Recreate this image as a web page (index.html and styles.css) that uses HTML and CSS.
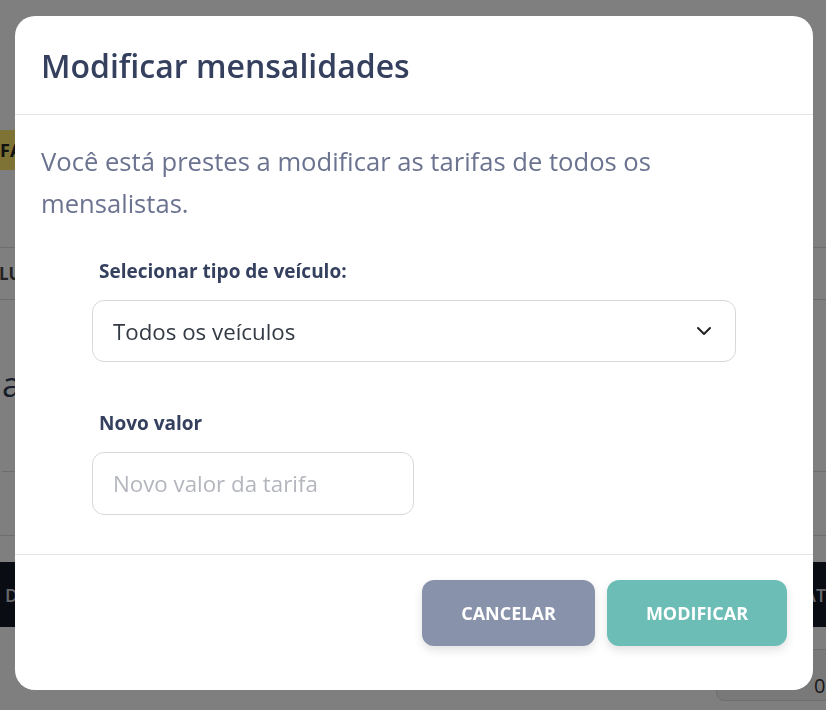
FILE: index.html
```html
<!DOCTYPE html>
<html lang="pt-BR">
<head>
<meta charset="utf-8">
<title>Modificar mensalidades</title>
<link rel="stylesheet" href="styles.css">
</head>
<body>
<div class="page">
  <div class="badge-row"><span class="badge">FATURAS</span></div>
  <div class="tabs"><span class="tab">LUGARES</span></div>
  <div class="page-title">atividades</div>
  <div class="rows"><div class="row"></div></div>
  <div class="darkbar"><span>DADOS</span><span>DATA</span></div>
  <div class="pager"><span class="pager-box">0</span></div>
</div>

<div class="overlay">
  <div class="modal">
    <div class="modal-header">
      <h2 class="modal-title">Modificar mensalidades</h2>
    </div>
    <div class="modal-body">
      <p class="intro">Você está prestes a modificar as tarifas de todos os mensalistas.</p>
      <div class="form">
        <div class="field">
          <label class="field-label">Selecionar tipo de veículo:</label>
          <div class="select">
            <span class="select-value">Todos os veículos</span>
            <svg class="chevron" width="18" height="18" viewBox="0 0 18 18" aria-hidden="true">
              <path d="M3 6 L9 12 L15 6" fill="none" stroke="#222" stroke-width="2" stroke-linecap="round" stroke-linejoin="round"/>
            </svg>
          </div>
        </div>
        <div class="field field-second">
          <label class="field-label">Novo valor</label>
          <div class="input"><span class="placeholder">Novo valor da tarifa</span></div>
        </div>
      </div>
    </div>
    <div class="modal-footer">
      <button class="btn btn-cancel">CANCELAR</button>
      <button class="btn btn-ok">MODIFICAR</button>
    </div>
  </div>
</div>
</body>
</html>
```

FILE: styles.css
```css
* { box-sizing: border-box; }
html, body { margin: 0; padding: 0; }
body {
  width: 826px;
  height: 710px;
  overflow: hidden;
  font-family: "Open Sans", "Noto Sans", sans-serif;
  background: #ffffff;
}

/* background page */
.page {
  height: 710px;
  overflow: hidden;
  background: #ffffff;
}
.badge-row {
  padding-top: 130px;
  height: 170px;
}
.badge {
  display: flex;
  align-items: center;
  width: 120px;
  height: 40px;
  background: #fde56a;
  color: #222;
  font-weight: 700;
  font-size: 18px;
  padding-left: 0;
}
.tabs {
  margin-top: 77px;
  height: 53px;
  border-top: 1px solid #dddddd;
  border-bottom: 1px solid #dddddd;
  display: flex;
  align-items: center;
}
.tab {
  font-weight: 700;
  font-size: 17px;
  color: #444;
  margin-left: -1px;
}
.page-title {
  height: 172px;
  padding-top: 62px;
  font-size: 34px;
  color: #2e3a55;
  margin-left: 2px;
  line-height: 44px;
  border-bottom: 1px solid #dddddd;
}
.rows {
  height: 64px;
  border-bottom: 1px solid #dddddd;
}
.darkbar {
  margin-top: 26px;
  height: 65px;
  background: #141828;
  color: #cfcfd6;
  font-size: 18px;
  font-weight: 600;
  display: flex;
  align-items: center;
  justify-content: space-between;
  padding: 0 28px 0 5px;
  margin-right: -40px;
}
.pager {
  display: flex;
  justify-content: flex-end;
  padding-top: 22px;
}
.pager-box {
  width: 120px;
  height: 52px;
  margin-right: -10px;
  background: #f2f2f2;
  border: 1px solid #dcdcdc;
  border-radius: 8px;
  color: #333;
  font-size: 20px;
  padding: 22px 0 0 97px;
  overflow: hidden;
}

/* overlay + modal */
.overlay {
  position: fixed;
  inset: 0;
  background: rgba(0, 0, 0, 0.5);
  display: flex;
  align-items: flex-start;
  padding: 16px 13px 0 15px;
}
.modal {
  width: 798px;
  background: #ffffff;
  border-radius: 20px;
  overflow: hidden;
}
.modal-header {
  padding: 30px 26px 28px;
  border-bottom: 1px solid #e3e5e9;
}
.modal-title {
  margin: 0;
  font-size: 32px;
  line-height: 40px;
  font-weight: 600;
  color: #34405e;
}
.modal-body {
  padding: 26px 26px 39px;
  border-bottom: 1px solid #e3e5e9;
}
.intro {
  margin: 0;
  font-size: 25.6px;
  line-height: 42px;
  color: #6b7390;
  width: 660px;
}
.form {
  padding: 34px 51px 0;
}
.field-second { margin-top: 49px; }
.field-label {
  display: block;
  padding-left: 7px;
  font-size: 19px;
  line-height: 24px;
  font-weight: 700;
  color: #34405e;
  margin-bottom: 17px;
}
.select {
  height: 62px;
  border: 1px solid #d6d8dc;
  border-radius: 12px;
  display: flex;
  align-items: center;
  justify-content: space-between;
  padding: 0 22px 0 20px;
}
.select-value {
  font-size: 22.3px;
  color: #333a44;
}
.chevron { display: block; }
.input {
  width: 322px;
  height: 63px;
  border: 1px solid #d6d8dc;
  border-radius: 12px;
  display: flex;
  align-items: center;
  padding: 0 20px;
}
.placeholder {
  font-size: 22.3px;
  color: #b3b6bd;
}
.modal-footer {
  display: flex;
  justify-content: flex-end;
  gap: 12px;
  padding: 25px 26px 44px;
}
.btn {
  height: 66px;
  border: none;
  border-radius: 12px;
  color: #ffffff;
  font-family: "Open Sans", "Noto Sans", sans-serif;
  font-size: 18px;
  font-weight: 700;
  box-shadow: 0 4px 10px rgba(0, 0, 0, 0.12);
}
.btn-cancel { width: 173px; background: #8892aa; }
.btn-ok { width: 180px; background: #6cbdb5; }
```
